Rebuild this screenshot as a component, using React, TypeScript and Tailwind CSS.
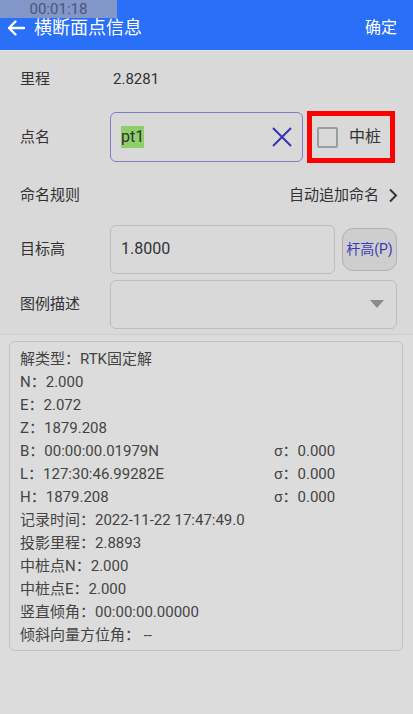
import React from "react";

const font = { fontFamily: 'Roboto, "Noto Sans CJK SC", sans-serif' };

function Row({ label, children, className = "" }: { label: string; children?: React.ReactNode; className?: string }) {
  return (
    <div className={"flex items-center " + className}>
      <div className="w-[110px] pl-5 text-[15px] text-[#333]">{label}</div>
      {children}
    </div>
  );
}

export default function App() {
  const info: [string, string?][] = [
    ["解类型：RTK固定解"],
    ["N：2.000"],
    ["E：2.072"],
    ["Z：1879.208"],
    ["B：00:00:00.01979N", "σ：0.000"],
    ["L：127:30:46.99282E", "σ：0.000"],
    ["H：1879.208", "σ：0.000"],
    ["记录时间：2022-11-22 17:47:49.0"],
    ["投影里程：2.8893"],
    ["中桩点N：2.000"],
    ["中桩点E：2.000"],
    ["竖直倾角：00:00:00.00000"],
    ["倾斜向量方位角： --"],
  ];

  return (
    <div className="relative w-[413px] h-[714px] bg-[#d9d9d9] overflow-hidden" style={font}>
      {/* status overlay */}
      <div className="absolute left-0 top-0 w-[117px] h-[18px] bg-[#8297c8] text-[#4a5677] text-[15px] leading-[18px] text-center z-10">
        00:01:18
      </div>

      {/* header */}
      <div className="h-[51px] bg-[#2a6ff7] flex items-center pl-[6px] pr-4 pt-[5px] border-b border-[#e2e2e2]">
        <svg width="20" height="18" viewBox="0 0 20 18" className="mr-[8px]">
          <path d="M18 9H3M9.5 2.5L3 9l6.5 6.5" stroke="#fff" strokeWidth="2.4" fill="none" strokeLinecap="round" strokeLinejoin="round" />
        </svg>
        <div className="text-white text-[18px] flex-1">横断面点信息</div>
        <div className="text-white text-[16px]">确定</div>
      </div>

      <Row label="里程" className="h-[56px]">
        <div className="text-[15px] text-[#333] pl-[3px]">2.8281</div>
      </Row>

      <Row label="点名" className="h-[60px]">
        <div className="w-[193px] h-[50px] border border-[#7d80c6] rounded-[6px] flex items-center pl-[10px] pr-[9px]">
          <span className="bg-[#8fce6b] text-[#333] text-[16px] leading-[22px]">pt1</span>
          <div className="flex-1" />
          <svg width="22" height="22" viewBox="0 0 22 22">
            <path d="M2 2L20 20M20 2L2 20" stroke="#3434ad" strokeWidth="2" />
          </svg>
        </div>
        <div className="ml-[4px] w-[88px] h-[52px] border-[5px] border-[#ff0000] flex items-center pl-[5px]">
          <div className="w-[21px] h-[21px] border-2 border-[#9c9c9c] rounded-[2px]" />
          <span className="ml-[11px] text-[16px] text-[#333]">中桩</span>
        </div>
      </Row>

      <div className="h-[56px] flex items-center pl-5 pr-[15px]">
        <div className="flex-1 text-[15px] text-[#333]">命名规则</div>
        <div className="text-[15px] text-[#333]">自动追加命名</div>
        <svg width="10" height="15" viewBox="0 0 10 15" className="ml-[9px]">
          <path d="M2 1.5L8 7.5 2 13.5" stroke="#333" strokeWidth="2" fill="none" />
        </svg>
      </div>

      <Row label="目标高" className="h-[52px]">
        <div className="w-[225px] h-[49px] border border-[#bdbdbd] rounded-[6px] flex items-center pl-[10px] text-[16px] text-[#333]">
          1.8000
        </div>
        <div className="ml-[7px] w-[55px] h-[43px] border border-[#b2b2b2] rounded-[11px] bg-[#cecece] flex items-center justify-center text-[14px] text-[#3a3ab8]">
          杆高(P)
        </div>
      </Row>

      <Row label="图例描述" className="h-[59px] pt-[4px] pb-[5px]">
        <div className="w-[287px] h-[49px] border border-[#bdbdbd] rounded-[6px] flex items-center justify-end pr-[12px]">
          <svg width="14" height="8" viewBox="0 0 14 8">
            <path d="M0 0h14L7 8z" fill="#8a8a8a" />
          </svg>
        </div>
      </Row>

      <div className="border-t border-[#cfcfcf] bg-[#dcdcdc] pt-[6px] px-[9px] h-full">
        <div className="w-[394px] h-[310px] border border-[#c2c2c2] rounded-[6px] pl-[10px] pt-[6px] text-[15px] text-[#444]">
          {info.map(([a, b], i) => (
            <div key={i} className="flex h-[23px] items-center">
              <div className="w-[254px] whitespace-nowrap">{a}</div>
              {b && <div>{b}</div>}
            </div>
          ))}
        </div>
      </div>
    </div>
  );
}
